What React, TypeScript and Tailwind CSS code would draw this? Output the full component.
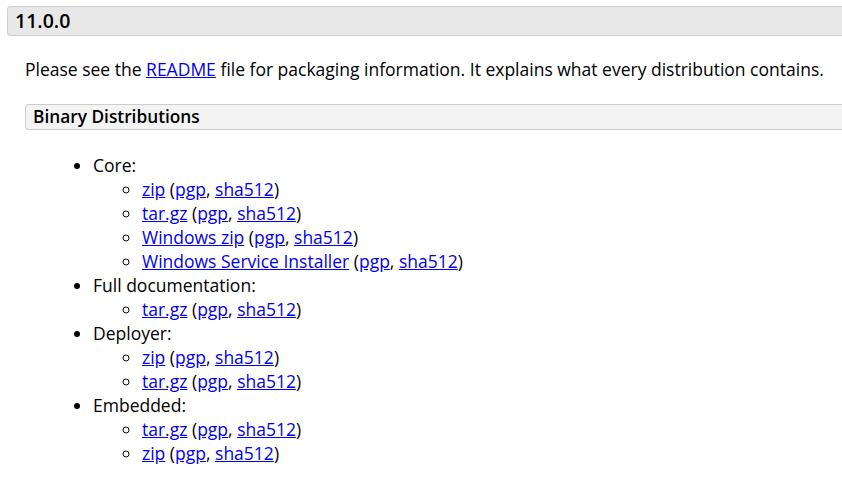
const font = { fontFamily: '"Open Sans", "Liberation Sans", sans-serif' };

type Item = { label: string };

const groups: { title: string; items: Item[] }[] = [
  {
    title: 'Core:',
    items: [
      { label: 'zip' },
      { label: 'tar.gz' },
      { label: 'Windows zip' },
      { label: 'Windows Service Installer' },
    ],
  },
  { title: 'Full documentation:', items: [{ label: 'tar.gz' }] },
  { title: 'Deployer:', items: [{ label: 'zip' }, { label: 'tar.gz' }] },
  { title: 'Embedded:', items: [{ label: 'tar.gz' }, { label: 'zip' }] },
];

function Link({ children }: { children: React.ReactNode }) {
  return <a href="#" className="text-[#0000ee] underline">{children}</a>;
}

export default function App() {
  return (
    <div className="w-[842px] h-[478px] overflow-hidden bg-white text-black" style={font}>
      <div className="pt-[6px] pl-[7px]">
        <h3 className="h-[30px] border border-r-0 border-[#cccccc] rounded-l-[4px] bg-[#e8e8e8] pl-[7px] text-[19.5px] font-semibold leading-[28px]">
          11.0.0
        </h3>
        <div className="pl-[18px]">
          <p className="mt-[21px] text-[17.5px] leading-[24px]">
            Please see the <Link>README</Link> file for packaging information. It explains what every distribution contains.
          </p>
          <h4 className="mt-[23px] h-[26px] border border-r-0 border-[#cccccc] rounded-l-[4px] bg-[#f4f4f4] pl-[7px] text-[17.3px] font-semibold leading-[24px]">
            Binary Distributions
          </h4>
          <ul className="mt-[23px] list-disc pl-[68px] text-[17.5px] leading-[24px]">
            {groups.map((g, i) => (
              <li key={i}>
                {g.title}
                <ul className="list-[circle] pl-[49px]">
                  {g.items.map((it, j) => (
                    <li key={j}>
                      <Link>{it.label}</Link> (<Link>pgp</Link>, <Link>sha512</Link>)
                    </li>
                  ))}
                </ul>
              </li>
            ))}
          </ul>
        </div>
      </div>
    </div>
  );
}
